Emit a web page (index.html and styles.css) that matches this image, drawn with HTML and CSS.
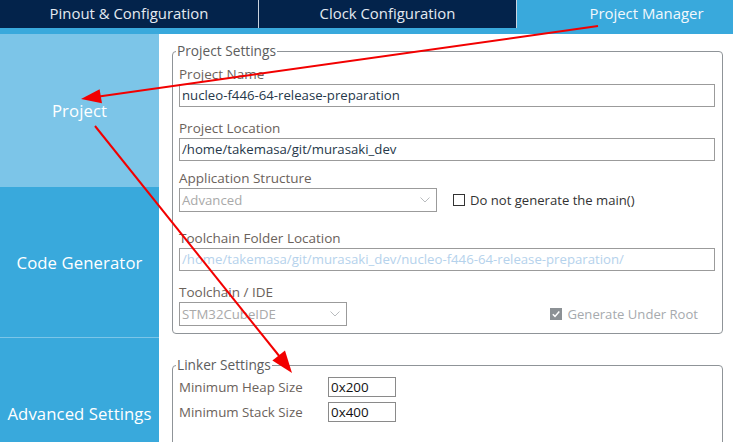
FILE: index.html
```html
<!DOCTYPE html>
<html>
<head>
<meta charset="utf-8">
<link rel="stylesheet" href="styles.css">
</head>
<body>
<div class="app">
  <nav class="tabs">
    <div class="tab">Pinout &amp; Configuration</div>
    <div class="tab">Clock Configuration</div>
    <div class="tab active">Project Manager</div>
  </nav>
  <div class="strip"></div>
  <div class="body">
    <aside class="side">
      <div class="side-item active s1">Project</div>
      <div class="side-item s2">Code Generator</div>
      <div class="side-item s3">Advanced Settings</div>
    </aside>
    <main class="content">
      <fieldset class="group project">
        <legend>Project Settings</legend>
        <div class="field f-name">
          <div class="label">Project Name</div>
          <div class="input">nucleo-f446-64-release-preparation</div>
        </div>
        <div class="field f-loc">
          <div class="label">Project Location</div>
          <div class="input">/home/takemasa/git/murasaki_dev</div>
        </div>
        <div class="field f-app">
          <div class="label">Application Structure</div>
          <div class="row">
            <div class="select wide">
              <span>Advanced</span>
              <svg class="chev" width="10" height="6" viewBox="0 0 10 6"><path d="M0.5 0.5 L5 5 L9.5 0.5" fill="none" stroke="#b9bcbf" stroke-width="1"/></svg>
            </div>
            <label class="check">
              <span class="box"></span>
              <span>Do not generate the main()</span>
            </label>
          </div>
        </div>
        <div class="field f-folder">
          <div class="label">Toolchain Folder Location</div>
          <div class="input faint">/home/takemasa/git/murasaki_dev/nucleo-f446-64-release-preparation/</div>
        </div>
        <div class="field f-ide">
          <div class="label">Toolchain / IDE</div>
          <div class="row between">
            <div class="select narrow">
              <span>STM32CubeIDE</span>
              <svg class="chev" width="10" height="6" viewBox="0 0 10 6"><path d="M0.5 0.5 L5 5 L9.5 0.5" fill="none" stroke="#b9bcbf" stroke-width="1"/></svg>
            </div>
            <label class="check disabled">
              <span class="box checked"><svg width="10" height="10" viewBox="0 0 10 10"><path d="M1.8 5.2 L4 7.4 L8.3 2.6" fill="none" stroke="#ffffff" stroke-width="1.5"/></svg></span>
              <span>Generate Under Root</span>
            </label>
          </div>
        </div>
      </fieldset>

      <fieldset class="group linker">
        <legend>Linker Settings</legend>
        <div class="lrow">
          <div class="label">Minimum Heap Size</div>
          <div class="small-input">0x200</div>
        </div>
        <div class="lrow">
          <div class="label">Minimum Stack Size</div>
          <div class="small-input">0x400</div>
        </div>
      </fieldset>
    </main>
  </div>

  <svg class="arrows" width="733" height="442" viewBox="0 0 733 442">
    <line x1="598" y1="26" x2="99" y2="96.5" stroke="#f20000" stroke-width="2"/>
    <polygon points="81,99 102,103.3 99.6,89.2" fill="#f20000"/>
    <line x1="95" y1="126" x2="280" y2="357" stroke="#f20000" stroke-width="2"/>
    <polygon points="292,373 272.4,360.5 285,350.5" fill="#f20000"/>
  </svg>
</div>
</body>
</html>
```

FILE: styles.css
```css
* { box-sizing: border-box; }

html, body {
  margin: 0;
  padding: 0;
  width: 733px;
  height: 442px;
  overflow: hidden;
  background: #ffffff;
  font-family: "Open Sans", "DejaVu Sans", sans-serif;
}

.app {
  position: relative;
  width: 733px;
  height: 442px;
  overflow: hidden;
}

/* top tabs */
.tabs {
  display: flex;
  height: 28px;
  background: #03234b;
  overflow: hidden;
}

.tab {
  flex: 0 0 259px;
  height: 28px;
  line-height: 27px;
  text-align: center;
  color: #e4eaf1;
  font-size: 14.9px;
  border-right: 1px solid #c9d2de;
  white-space: nowrap;
}

.tab:nth-child(2) { flex-basis: 258px; }

.tab.active {
  background: #39a9dc;
  border-right: none;
  color: #f2f8fc;
}

.strip {
  height: 6px;
  background: #39a9dc;
}

.body {
  display: flex;
  height: 408px;
}

/* sidebar */
.side {
  flex: 0 0 159px;
  display: flex;
  flex-direction: column;
  background: #39a9dc;
}

.side-item {
  flex-shrink: 0;
  display: flex;
  align-items: center;
  justify-content: center;
  color: #ffffff;
  font-size: 16.7px;
  letter-spacing: 0.1px;
  white-space: nowrap;
}

.side-item.active { background: #7cc5e8; }
.s1 { height: 153px; }
.s2 { height: 151px; border-bottom: 1px solid #7cc5e8; }
.s3 { height: 158px; padding-bottom: 8px; }

/* content */
.content {
  flex: 1;
  padding: 9px 10px 0 13px;
  background: #ffffff;
}

.group {
  margin: 0;
  border: 1px solid #8f9498;
  border-radius: 4px;
  padding: 7px 7px 7px 6px;
  min-width: 0;
}

.group legend {
  padding: 0 1px;
  margin-left: -3px;
  font-size: 13.7px;
  line-height: 16px;
  color: #5d5d5d;
}

.label {
  font-size: 13.5px;
  line-height: 16px;
  color: #6b625b;
  white-space: nowrap;
}

.field .label { margin-bottom: 2px; }

.f-loc { margin-top: 13px; }
.f-app { margin-top: 9px; }
.f-folder { margin-top: 18px; }
.f-ide { margin-top: 13px; }

.input {
  height: 23px;
  border: 1px solid #9b9b9b;
  padding: 0 2px;
  line-height: 21px;
  font-size: 13.2px;
  color: #26384a;
  white-space: nowrap;
  overflow: hidden;
}

.input.faint { color: #b5d2ec; }

.row {
  display: flex;
  align-items: center;
}

.row.between { justify-content: space-between; }

.select {
  height: 24px;
  border: 1px solid #9b9b9b;
  display: flex;
  align-items: center;
  justify-content: space-between;
  padding: 0 6px 0 2px;
  font-size: 13.2px;
  color: #a9a9a9;
}

.select.wide { width: 258px; }
.select.narrow { width: 168px; }

.check {
  display: flex;
  align-items: center;
  font-size: 13.1px;
  color: #333333;
  margin-left: 16px;
}

.check .box {
  width: 12px;
  height: 12px;
  border: 1px solid #333333;
  margin-right: 5px;
  display: flex;
  align-items: center;
  justify-content: center;
}

.check.disabled {
  color: #a6aaae;
  margin-right: 17px;
}

.check.disabled .box { margin-right: 6px; }

.check .box.checked {
  border: none;
  background: #8c9195;
}

/* linker */
.linker {
  margin-top: 23px;
  padding-top: 4px;
  height: 120px;
}

.lrow {
  display: flex;
  align-items: center;
  margin-bottom: 5px;
}

.lrow .label { width: 149px; font-size: 13.3px; }

.small-input {
  width: 68px;
  height: 20px;
  border: 1px solid #8a8a8a;
  padding: 0 2px;
  line-height: 18px;
  font-size: 13.4px;
  color: #111111;
}

/* annotation arrows */
.arrows {
  position: absolute;
  left: 0;
  top: 0;
  pointer-events: none;
}
```
